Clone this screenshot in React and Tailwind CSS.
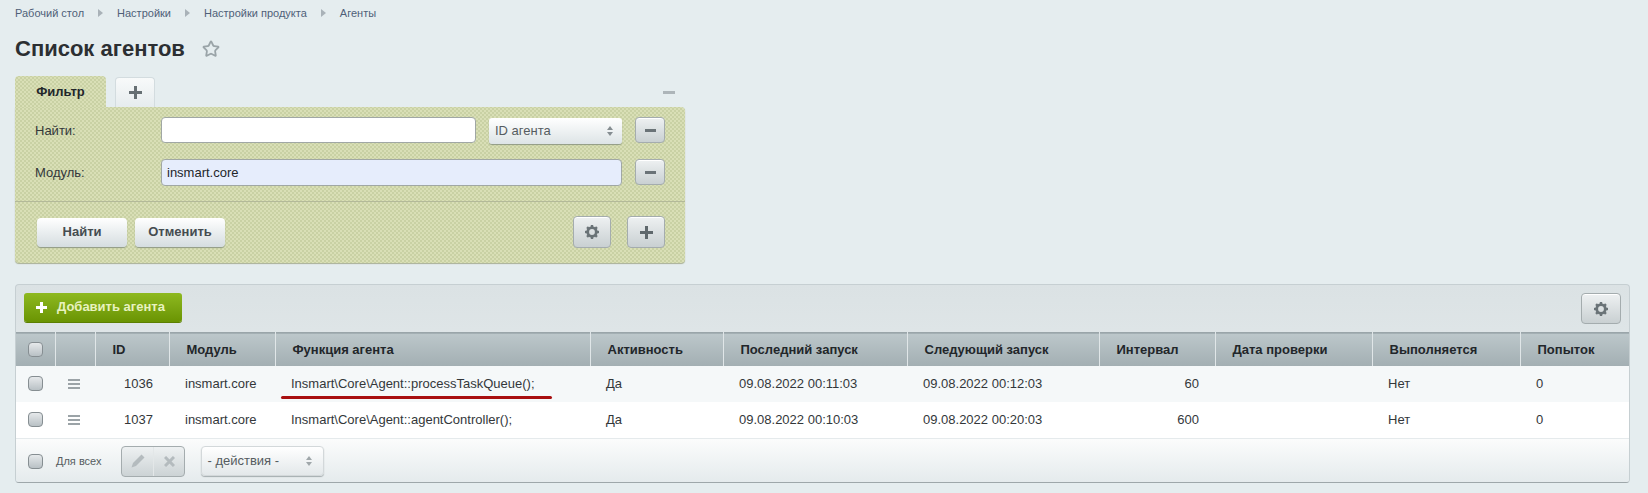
import React from "react";
import { Star } from "lucide-react";

const columns = [
  { label: "", width: "w-[39px]" },
  { label: "", width: "w-[40px]" },
  { label: "ID", width: "w-[74px]" },
  { label: "Модуль", width: "w-[106px]" },
  { label: "Функция агента", width: "w-[315px]" },
  { label: "Активность", width: "w-[133px]" },
  { label: "Последний запуск", width: "w-[184px]" },
  { label: "Следующий запуск", width: "w-[192px]" },
  { label: "Интервал", width: "w-[116px]" },
  { label: "Дата проверки", width: "w-[157px]" },
  { label: "Выполняется", width: "w-[148px]" },
  { label: "Попыток", width: "w-[109px]" },
];

const rows = [
  { id: 1036, fn: "Insmart\\Core\\Agent::processTaskQueue();", last: "09.08.2022 00:11:03", next: "09.08.2022 00:12:03", interval: 60 },
  { id: 1037, fn: "Insmart\\Core\\Agent::agentController();", last: "09.08.2022 00:10:03", next: "09.08.2022 00:20:03", interval: 600 },
];

const dotted =
  "bg-[#d9dfb6] bg-[radial-gradient(#c9d1a4_0.8px,transparent_1px),radial-gradient(#c9d1a4_0.8px,transparent_1px)] bg-[length:4px_4px] bg-[position:0_0,2px_2px]";

function PlusIcon({ size = 13, thick = 3 }) {
  const mid = size / 2;
  return (
    <svg width={size} height={size} viewBox={`0 0 ${size} ${size}`} fill="none" stroke="currentColor" strokeWidth={thick}>
      <path d={`M${mid} 0V${size}M0 ${mid}H${size}`} />
    </svg>
  );
}

function MinusIcon() {
  return (
    <svg width="11" height="3" viewBox="0 0 11 3" fill="#6a7377">
      <rect width="11" height="3" />
    </svg>
  );
}

function GearIcon() {
  const teeth = [0, 45, 90, 135, 180, 225, 270, 315];
  return (
    <svg width="14" height="14" viewBox="0 0 14 14" fill="none" className="text-[#6a7377]">
      <circle cx="7" cy="7" r="4.3" stroke="currentColor" strokeWidth="2.8" />
      {teeth.map((deg) => (
        <rect key={deg} x="5.8" y="0" width="2.4" height="2.4" fill="currentColor" transform={`rotate(${deg} 7 7)`} />
      ))}
    </svg>
  );
}

function SortArrows({ className }) {
  return (
    <svg width="6" height="10" viewBox="0 0 6 10" fill="currentColor" className={className}>
      <path d="M3 0 6 4H0ZM0 6H6L3 10Z" />
    </svg>
  );
}

function BarsIcon() {
  return (
    <svg width="12" height="10" viewBox="0 0 12 10" fill="#9ba3a7" className="block">
      <rect y="0" width="12" height="2" />
      <rect y="4" width="12" height="2" />
      <rect y="8" width="12" height="2" />
    </svg>
  );
}

function Checkbox() {
  return (
    <span className="block w-[15px] h-[15px] rounded-[4px] border border-[#868e92] bg-gradient-to-b from-[#e6e9eb] to-[#b9c1c5]" />
  );
}

function IconButton({ className, children }) {
  return (
    <button className={"flex items-center justify-center rounded-[4px] border border-[#a4acae] bg-gradient-to-b from-[#eef1f2] to-[#c9d0d2] text-[#5f686c] shadow-[inset_0_1px_0_#fff] " + className}>
      {children}
    </button>
  );
}

function FilterButton({ className, children }) {
  return (
    <button className={"h-[29px] rounded-[4px] bg-gradient-to-b from-[#ffffff] to-[#d5dde0] text-[13px] font-bold text-[#454c50] shadow-[0_1px_1px_#8f9a85] " + className}>
      {children}
    </button>
  );
}

function Crumb() {
  return <span className="mx-[14px] w-0 h-0 border-y-[4px] border-y-transparent border-l-[5px] border-l-[#a9b2b8]" />;
}

export default function App() {
  return (
    <div className="w-[1648px] h-[493px] overflow-hidden bg-[#e5edef] font-['Liberation_Sans',Arial,sans-serif] pl-[15px]">
      <nav className="flex items-center h-[26px] text-[11px] text-[#4f5f78]">
        <span>Рабочий стол</span>
        <Crumb />
        <span>Настройки</span>
        <Crumb />
        <span>Настройки продукта</span>
        <Crumb />
        <span>Агенты</span>
      </nav>

      <div className="flex items-center h-[42px] mt-[1px]">
        <h1 className="text-[22px] font-bold text-[#2c2f32]">Список агентов</h1>
        <Star className="ml-[17px] mt-[2px] text-[#9aa4a8]" size={18} strokeWidth={2.4} />
      </div>

      <section className="w-[670px] mt-[7px]">
        <div className="flex items-end h-[31px] relative">
          <div className={"w-[91px] h-[31px] rounded-t-[4px] flex items-center justify-center text-[13px] font-bold text-[#22262a] " + dotted}>
            Фильтр
          </div>
          <div className="ml-[9px] w-[40px] h-[30px] rounded-t-[4px] border border-b-0 border-[#d3dcdf] bg-gradient-to-b from-[#f8fafa] to-[#e6ecee] flex items-center justify-center text-[#666f73]">
            <PlusIcon />
          </div>
          <span className="absolute right-[10px] top-[15px] w-[12px] h-[3px] bg-[#adb5b9]" />
        </div>

        <div className={"h-[156px] rounded-b-[4px] rounded-tr-[4px] shadow-[0_1px_1px_#a9b096] text-[13px] text-[#33373a] " + dotted}>
          <div className="flex items-center pt-[10px] h-[36px]">
            <span className="w-[146px] pl-[20px] pt-[2px]">Найти:</span>
            <input className="w-[315px] h-[26px] rounded-[4px] border border-[#a0a7a4] bg-white" />
            <div className="ml-[13px] mt-[1px] w-[133px] h-[26px] rounded-[3px] bg-gradient-to-b from-[#ffffff] to-[#dde4e6] shadow-[0_1px_1px_#8f9a85] flex items-center justify-between pl-[6px] pr-[9px] text-[#555c60]">
              <span>ID агента</span>
              <SortArrows className="text-[#858d91]" />
            </div>
            <IconButton className="ml-[13px] w-[30px] h-[26px]"><MinusIcon /></IconButton>
          </div>

          <div className="flex items-center mt-[16px] h-[26px]">
            <span className="w-[146px] pl-[20px] pt-[2px]">Модуль:</span>
            <div className="w-[461px] h-[27px] rounded-[4px] border border-[#a0a7a4] bg-[#e6edfc] flex items-center pl-[5px] pt-[1px] text-[#22262a]">insmart.core</div>
            <IconButton className="ml-[13px] w-[30px] h-[26px]"><MinusIcon /></IconButton>
          </div>

          <div className="mt-[16px] border-t border-[#b3b999]" />

          <div className="flex items-center pt-[14px] pl-[22px] pr-[20px]">
            <FilterButton className="w-[90px]">Найти</FilterButton>
            <FilterButton className="ml-[8px] w-[90px]">Отменить</FilterButton>
            <IconButton className="ml-auto w-[38px] h-[32px]"><GearIcon /></IconButton>
            <IconButton className="ml-[16px] w-[38px] h-[32px]"><PlusIcon /></IconButton>
          </div>
        </div>
      </section>

      <section className="relative w-[1615px] h-[199px] mt-[21px] rounded-[4px] border border-[#c6cfd2] border-b-[#9ea7aa] overflow-hidden bg-gradient-to-b from-[#dbe2e4] to-[#e9eff1]">
        <div className="flex items-start justify-between h-[47px] pt-[8px] pl-[8px] pr-[8px]">
          <button className="flex items-center w-[158px] h-[29px] rounded-[3px] bg-gradient-to-b from-[#8eb91f] to-[#6a9402] shadow-[0_1px_0_#5b7f00] pl-[12px] text-[13px] font-bold text-[#e8f2c0]">
            <span className="text-white"><PlusIcon size={11} thick={3} /></span>
            <span className="ml-[10px] pb-[1px]">Добавить агента</span>
          </button>
          <IconButton className="w-[40px] h-[31px]"><GearIcon /></IconButton>
        </div>

        <table className="w-full table-fixed border-collapse text-[13px] text-[#33373a]">
          <thead>
            <tr className="h-[33px] bg-gradient-to-b from-[#bcc7ca] to-[#a3afb3] border-t border-[#9aa5a9]">
              {columns.map((col, i) => (
                <th key={i} className={col.width + " border-r border-[#e0e6e8] last:border-r-0 text-left font-bold text-[#22262a] pl-[17px]"}>
                  {i === 0 ? <span className="block -ml-[5px]"><Checkbox /></span> : col.label}
                </th>
              ))}
            </tr>
          </thead>
          <tbody>
            {rows.map((row, i) => (
              <tr key={row.id} className={"h-[36px] " + (i === 0 ? "bg-[#f5f8f9]" : "bg-white")}>
                <td className="pl-[12px]"><Checkbox /></td>
                <td className="pl-[13px]"><BarsIcon /></td>
                <td className="text-right pr-[16px]">{row.id}</td>
                <td className="pl-[16px]">insmart.core</td>
                <td className="pl-[16px]">{row.fn}</td>
                <td className="pl-[16px]">Да</td>
                <td className="pl-[16px]">{row.last}</td>
                <td className="pl-[16px]">{row.next}</td>
                <td className="text-right pr-[16px]">{row.interval}</td>
                <td></td>
                <td className="pl-[16px]">Нет</td>
                <td className="pl-[16px]">0</td>
              </tr>
            ))}
          </tbody>
        </table>

        <div className="flex items-center h-[46px] border-t border-[#e5eaec] bg-gradient-to-b from-[#fbfcfc] to-[#e4eaec] pl-[12px] text-[11px] text-[#555c60]">
          <Checkbox />
          <span className="ml-[13px]">Для всех</span>
          <div className="ml-[20px] flex w-[64px] h-[31px] rounded-[4px] border border-[#a4acae] bg-gradient-to-b from-[#eef1f2] to-[#ccd3d5] text-[#b4bbbe]">
            <span className="flex-1 flex items-center justify-center border-r border-[#e3e7e8]">
              <svg width="14" height="14" viewBox="0 0 14 14" fill="currentColor">
                <path d="M10.5 0.5 13.5 3.5 5 12 0.5 13.5 2 9Z" />
              </svg>
            </span>
            <span className="flex-1 flex items-center justify-center">
              <svg width="11" height="11" viewBox="0 0 11 11" fill="none" stroke="currentColor" strokeWidth="3">
                <path d="M1 1 10 10M10 1 1 10" />
              </svg>
            </span>
          </div>
          <div className="ml-[16px] w-[123px] h-[30px] rounded-[4px] border border-[#d3d8da] bg-gradient-to-b from-[#ffffff] to-[#e3e8ea] shadow-[0_1px_1px_#a4acae] flex items-center justify-between pl-[5px] pr-[11px] text-[13px] text-[#555c60]">
            <span>- действия -</span>
            <SortArrows className="text-[#a0a7aa]" />
          </div>
        </div>

        <span className="absolute left-[265px] top-[111px] w-[271px] h-[3px] rounded-full bg-[#a80f10]" />
      </section>
    </div>
  );
}
